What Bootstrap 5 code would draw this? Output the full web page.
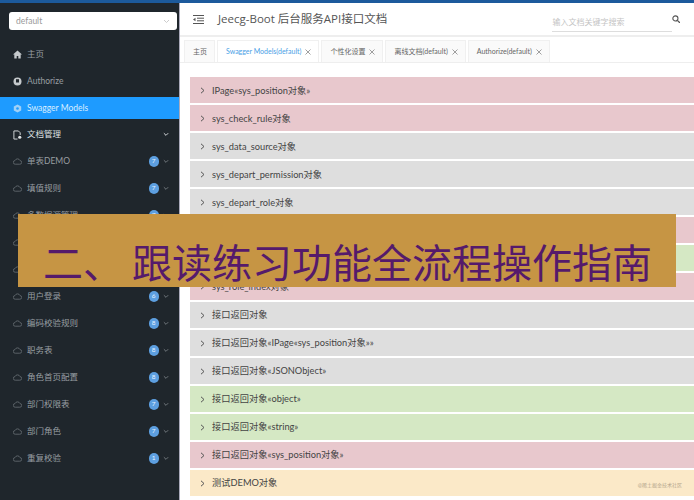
<!DOCTYPE html>
<html lang="zh">
<head>
    <meta charset="UTF-8">
    <meta name="viewport" content="width=device-width, initial-scale=1.0">
    <title>Jeecg-Boot 后台服务API接口文档</title>
    <link href="https://cdn.jsdelivr.net/npm/bootstrap@5.3.0/dist/css/bootstrap.min.css" rel="stylesheet">
    <style>
        html, body { height: 500px; overflow: hidden; }
        body { font-family: Lato, "Noto Sans CJK SC", sans-serif; font-size: 8.5px; background: #fff; color: #444; position: relative; }
        .top-strip { height: 3px; background: #1c5a9c; }
        .page-wrap { height: 497px; }
        .side-panel { width: 180px; flex: none; background: #1f262c; border-right: 1px solid #aab; padding-top: 9px; color: #989ea2; overflow: hidden; }
        .side-select { margin: 0 2px 0 9px; height: 18px; border-radius: 3px; background: #fff; color: #999; padding: 0 7px; font-size: 8.5px; }
        .side-item { height: 27px; padding: 0 10px 0 13px; white-space: nowrap; }
        .side-label { margin-left: 5px; }
        .side-first { margin-top: 10.5px; }
        .side-active { background: #1e9bff; color: #d9eeff; height: 22px; margin: 2.5px 0 2px; }
        .side-group { color: #dfe2e4; }
        .side-num { width: 10.5px; height: 10.5px; border-radius: 50%; background: #5d9fe0; color: #e6f1ff; font-size: 6.5px; line-height: 10.5px; text-align: center; margin-right: 4px; }
        .main-panel { min-width: 0; }
        .head-bar { height: 34px; padding: 0 14px 0 13px; border-bottom: 2px solid #eee; }
        .head-title { font-size: 11.5px; color: #555; margin-left: 14px; white-space: nowrap; font-family: "Open Sans", "Noto Sans CJK SC", sans-serif; }
        .search-box { width: 120px; height: 19px; margin-top: 6px; border-bottom: 1px solid #ddd; color: #c4c4c4; font-size: 8px; padding-left: 1px; }
        .tab-row { height: 26px; padding: 3px 0 0 4px; gap: 2px; border-bottom: 1px solid #eee; }
        .tab-box { height: 22px; padding: 0 7px 0 8px; border: 1px solid #f0f0f0; border-bottom: 0; background: #fafafa; font-size: 7px; color: #666; gap: 4px; white-space: nowrap; }
        .tab-on { color: #4aa0e6; background: #fff; }
        .model-list { padding: 14px 0 0 10px; gap: 2px; }
        .model-row { height: 26.07px; padding: 1px 0 0 10px; gap: 7px; font-size: 9.25px; color: #444; white-space: nowrap; flex: none; }
        .tone-red { background: #e8c8cd; }
        .tone-grey { background: #dedede; }
        .tone-green { background: #d5e8c4; }
        .tone-yellow { background: #fbe9c8; }
        .water-mark { position: absolute; right: 12px; bottom: 11px; font-size: 5px; color: #b5a68c; }
        .title-banner { position: absolute; left: 18px; top: 214px; width: 658px; height: 73px; background: #c69544; color: #551a6b; font-size: 40px; line-height: 1; padding: 27px 0 0 25px; white-space: nowrap; font-family: "Noto Sans CJK SC", sans-serif; }
    </style>
</head>
<body>
    <div class="top-strip"></div>
    <div class="page-wrap d-flex">
        <aside class="side-panel">
            <div class="side-select d-flex align-items-center justify-content-between">
                <span>default</span>
                <svg width="7" height="5" viewBox="0 0 7 5"><path d="M1 1l2.500 2.500L6 1" fill="none" stroke="#ccc"/></svg>
            </div>
            <div id="sideMenu"></div>
        </aside>
        <main class="main-panel flex-grow-1">
            <div class="head-bar d-flex align-items-center">
                <svg width="11" height="9" viewBox="0 0 11 9"><path d="M0 .5h11M4 3.200h7M4 5.800h7M0 8.500h11" stroke="#555"/><path d="M2.500 2.800L0 4.500l2.500 1.700z" fill="#555"/></svg>
                <div class="head-title">Jeecg-Boot 后台服务API接口文档</div>
                <div class="search-box ms-auto d-flex align-items-center">输入文档关键字搜索</div>
                <svg width="8.500" height="8.500" viewBox="0 0 10 10"><circle cx="4" cy="4" r="3" fill="none" stroke="#555" stroke-width="1.300"/><path d="M6.300 6.300L9.500 9.500" stroke="#555" stroke-width="1.500"/></svg>
            </div>
            <div class="tab-row d-flex">
                <div class="tab-box d-flex align-items-center">主页</div>
                <div class="tab-box tab-on d-flex align-items-center">Swagger Models(default) <svg width="6" height="6" viewBox="0 0 6 6"><path d="M.5 .5l5 5M5.500 .5l-5 5" stroke="#777" stroke-width=".7"/></svg></div>
                <div class="tab-box d-flex align-items-center">个性化设置 <svg width="6" height="6" viewBox="0 0 6 6"><path d="M.5 .5l5 5M5.500 .5l-5 5" stroke="#777" stroke-width=".7"/></svg></div>
                <div class="tab-box d-flex align-items-center">离线文档(default) <svg width="6" height="6" viewBox="0 0 6 6"><path d="M.5 .5l5 5M5.500 .5l-5 5" stroke="#777" stroke-width=".7"/></svg></div>
                <div class="tab-box d-flex align-items-center">Authorize(default) <svg width="6" height="6" viewBox="0 0 6 6"><path d="M.5 .5l5 5M5.500 .5l-5 5" stroke="#777" stroke-width=".7"/></svg></div>
            </div>
            <div class="model-list d-flex flex-column" id="modelList"></div>
        </main>
    </div>
    <div class="water-mark">@稀土掘金技术社区</div>
    <div class="title-banner">二、 跟读练习功能全流程操作指南</div>

    <script src="https://cdn.jsdelivr.net/npm/bootstrap@5.3.0/dist/js/bootstrap.bundle.min.js"></script>
    <script>
        const cloud = '<svg width="9" height="7" viewBox="0 0 10 7"><path d="M2.500 6.500h5a2 2 0 0 0 .3-4A3 3 0 0 0 2.200 2.500a2 2 0 0 0 .3 4z" fill="none" stroke="#71787d" stroke-width=".8"/></svg>';
        const chev = c => `<svg width="6" height="5" viewBox="0 0 7 5"><path d="M1 1l2.500 2.500L6 1" fill="none" stroke="${c}" stroke-width="1.100"/></svg>`;
        const home = '<svg width="9" height="9" viewBox="0 0 9 9"><path d="M4.500 .5L9 4.500H7.700V8.500H5.300V6H3.700V8.500H1.300V4.500H0z" fill="#c5c9cc"/></svg>';
        const auth = '<svg width="9" height="9" viewBox="0 0 9 9"><circle cx="4.500" cy="4.500" r="4" fill="#c5c9cc"/><rect x="3" y="2.200" width="3" height="3.300" fill="#1f262c"/></svg>';
        const cube = '<svg width="9" height="9" viewBox="0 0 9 9"><path d="M4.500 .5l3.700 2v4l-3.700 2-3.700-2v-4z" fill="#9fd0f7"/><circle cx="4.500" cy="4.500" r="1.300" fill="#1e9bff"/></svg>';
        const docs = '<svg width="9" height="10" viewBox="0 0 10 10"><path d="M1 .5h5l2 2v2.500M1 .5v9h4" fill="none" stroke="#dfe2e4"/><circle cx="7.500" cy="7.500" r="1.800" fill="#dfe2e4"/></svg>';

        // 左侧菜单，被横幅盖住的两行只留图标
        const groups = [['单表DEMO',7],['填值规则',7],['多数据源管理',7],['',0],['',0],['用户登录',6],['编码校验规则',8],['职务表',8],['角色首页配置',8],['部门权限表',7],['部门角色',7],['重复校验',1]];
        let html = `<div class="side-item side-first d-flex align-items-center">${home}<span class="side-label">主页</span></div>
            <div class="side-item d-flex align-items-center">${auth}<span class="side-label">Authorize</span></div>
            <div class="side-item side-active d-flex align-items-center">${cube}<span class="side-label">Swagger Models</span></div>
            <div class="side-item side-group d-flex align-items-center">${docs}<span class="side-label">文档管理</span><span class="ms-auto d-flex">${chev('#dfe2e4')}</span></div>`;
        groups.forEach(g => {
            const tail = g[1] ? `<span class="side-num ms-auto">${g[1]}</span>${chev('#777d82')}` : '';
            html += `<div class="side-item d-flex align-items-center">${cloud}<span class="side-label">${g[0]}</span>${tail}</div>`;
        });
        document.getElementById('sideMenu').innerHTML = html;

        // 模型列表，被横幅盖住的两行没有文字
        const models = [
            ['IPage«sys_position对象»','red'],['sys_check_rule对象','red'],['sys_data_source对象','grey'],
            ['sys_depart_permission对象','grey'],['sys_depart_role对象','grey'],['','red'],
            ['','green'],['sys_role_index对象','red'],['接口返回对象','grey'],
            ['接口返回对象«IPage«sys_position对象»»','grey'],['接口返回对象«JSONObject»','grey'],['接口返回对象«object»','green'],
            ['接口返回对象«string»','green'],['接口返回对象«sys_position对象»','red'],['测试DEMO对象','yellow']
        ];
        const arrow = '<svg width="5" height="7" viewBox="0 0 5 7"><path d="M1 .8L4 3.500 1 6.200" fill="none" stroke="#555"/></svg>';
        document.getElementById('modelList').innerHTML = models.map(m =>
            `<div class="model-row tone-${m[1]} d-flex align-items-center">${arrow}<span>${m[0]}</span></div>`).join('');
    </script>
</body>
</html>
